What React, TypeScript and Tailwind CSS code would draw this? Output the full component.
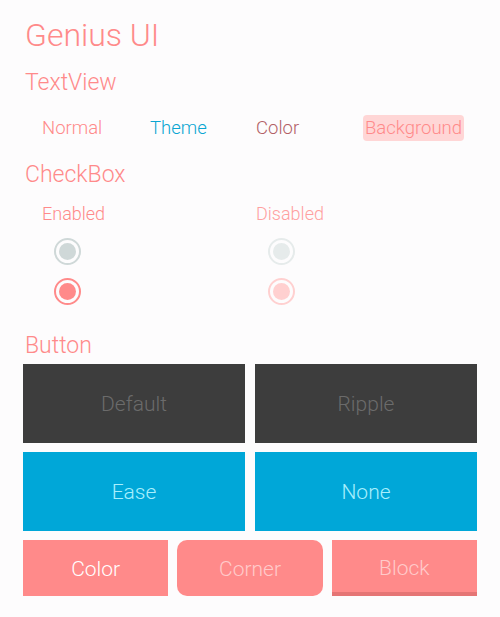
import React from "react";

// Radio-style check mark: ring + inner dot
const Dot = ({ ring, fill }: { ring: string; fill: string }) => (
  <span className={`flex h-[27px] w-[27px] items-center justify-center rounded-full border-2 ${ring}`}>
    <span className={`h-[17px] w-[17px] rounded-full ${fill}`} />
  </span>
);

const App: React.FC = () => {
  return (
    <div
      className="h-[617px] w-[500px] overflow-hidden bg-[#fdfcfd] px-[23px] text-[#ff8a8a]"
      style={{ fontFamily: "Roboto, 'Noto Sans', sans-serif" }}
    >
      <h1 className="pl-[2px] pt-[15px] text-[32px] font-light leading-[40px]">Genius UI</h1>

      <h2 className="mt-[14px] pl-[2px] text-[23px] font-light leading-[28px]">TextView</h2>
      <div className="mt-[18px] flex items-center pl-[19px] text-[18.5px] font-light leading-[26px]">
        <span className="w-[108px]">Normal</span>
        <span className="w-[106px] text-[#0aa6d2]">Theme</span>
        <span className="w-[107px] text-[#b25f66]">Color</span>
        <span className="rounded-[4px] bg-[#ffd6d6] px-[2px]">Background</span>
      </div>

      <h2 className="mt-[20px] pl-[2px] text-[23px] font-light leading-[28px]">CheckBox</h2>
      <div className="mt-[14px] flex pl-[19px]">
        <div className="w-[214px]">
          <div className="text-[18px] font-light leading-[22px]">Enabled</div>
          <div className="mt-[13px] flex flex-col gap-[13px] pl-[12px]">
            <Dot ring="border-[#cfd8d8]" fill="bg-[#cfd8d8]" />
            <Dot ring="border-[#ff8a8a]" fill="bg-[#ff8a8a]" />
          </div>
        </div>
        <div>
          <div className="text-[18px] font-light leading-[22px] text-[#ffa0a0]">Disabled</div>
          <div className="mt-[13px] flex flex-col gap-[13px] pl-[12px]">
            <Dot ring="border-[#e6ebeb]" fill="bg-[#e6ebeb]" />
            <Dot ring="border-[#ffd0d0]" fill="bg-[#ffd0d0]" />
          </div>
        </div>
      </div>

      <h2 className="mt-[27px] pl-[2px] text-[23px] font-light leading-[28px]">Button</h2>
      <div className="mt-[4px] grid grid-cols-2 gap-[10px] text-[21px] font-light">
        <button className="flex h-[79px] items-center justify-center bg-[#3d3d3d] pt-[3px] text-[#6b6b6b]">Default</button>
        <button className="flex h-[79px] items-center justify-center bg-[#3d3d3d] pt-[3px] text-[#6b6b6b]">Ripple</button>
      </div>
      <div className="mt-[9px] grid grid-cols-2 gap-[10px] text-[21px] font-light">
        <button className="flex h-[79px] items-center justify-center bg-[#00a7d8] pt-[3px] text-[#a8effd]">Ease</button>
        <button className="flex h-[79px] items-center justify-center bg-[#00a7d8] pt-[3px] text-[#a8effd]">None</button>
      </div>
      <div className="mt-[9px] grid grid-cols-3 gap-[9px] text-[21px] font-light">
        <button className="flex h-[56px] items-center justify-center bg-[#ff8a8a] pt-[3px] text-white">Color</button>
        <button className="flex h-[56px] items-center justify-center rounded-[10px] bg-[#ff8a8a] pt-[3px] text-[#ffcaca]">Corner</button>
        <button className="flex h-[56px] items-center justify-center border-b-[4px] border-[#e57575] bg-[#ff8a8a] pt-[6px] text-[#ffcaca]">Block</button>
      </div>
    </div>
  );
};

export default App;
